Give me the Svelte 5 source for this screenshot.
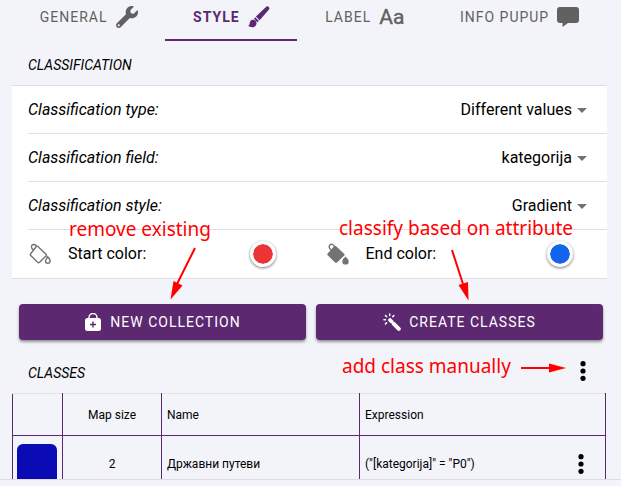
<script>
  const fields = [
    { id: 'type', label: 'Classification type:', value: 'Different values' },
    { id: 'field', label: 'Classification field:', value: 'kategorija' },
    { id: 'style', label: 'Classification style:', value: 'Gradient' }
  ];
  const classes = [
    { color: '#0b0bb5', size: 2, name: 'Државни путеви', expression: '("[kategorija]" = "P0")' }
  ];
  let start = $state('#ec3535');
  let end = $state('#1263ee');
</script>

{#snippet dots()}
  <svg width="6" height="20" viewBox="0 0 6 20" aria-hidden="true">
    <circle cx="3" cy="2.7" r="2.6" /><circle cx="3" cy="10" r="2.6" /><circle cx="3" cy="17.3" r="2.6" />
  </svg>
{/snippet}

<div class="page">
  <main>
    <nav>
      <button class="tab">
        GENERAL
        <svg width="22" height="22" viewBox="0 0 512 512"><path d="M507.73 109.1c-2.24-9.03-13.54-12.09-20.12-5.51l-74.36 74.36-67.88-11.31-11.31-67.88 74.36-74.36c6.62-6.62 3.43-17.9-5.66-20.16-47.38-11.74-99.55.91-136.58 37.93-39.64 39.64-50.55 97.1-34.05 147.2L18.74 402.76c-24.99 24.99-24.99 65.51 0 90.5 24.99 24.99 65.51 24.99 90.5 0l213.21-213.21c50.12 16.71 107.47 5.68 147.37-34.22 37.07-37.07 49.7-89.32 37.91-136.73zM64 472c-13.25 0-24-10.75-24-24 0-13.26 10.75-24 24-24s24 10.75 24 24c0 13.25-10.75 24-24 24z" /></svg>
      </button>
      <button class="tab active">
        STYLE
        <svg width="22" height="22" viewBox="0 0 22 22">
          <path d="M18 .9c1-.8 2-.8 2.800 0 .8.800.8 1.800 0 2.800L11.600 14.200 7.900 10.500Z" />
          <path d="M7.200 11.200l3.700 3.700-1.500 1.300-3.500-3.500Z" />
          <path d="M4.700 13.700c2.200-.1 3.900 1.500 3.800 3.600-.1 2.500-1.800 4-4.200 4-1.900 0-3.300-.6-4.100-1.700 1.300-.3 1.300-1.300 1.500-2.500.3-2 1.300-3.300 3-3.400Z" />
        </svg>
      </button>
      <button class="tab">LABEL <span class="aa" aria-hidden="true">Aa</span></button>
      <button class="tab">
        INFO PUPUP
        <svg width="22" height="22" viewBox="0 0 22 22"><path d="M3 1h16a3 3 0 0 1 3 3v10a3 3 0 0 1-3 3h-8l-5.500 4V17H3a3 3 0 0 1-3-3V4a3 3 0 0 1 3-3Z" /></svg>
      </button>
    </nav>

    <h2>CLASSIFICATION</h2>
    <section class="card">
      {#each fields as f}
        <div class="row">
          <label for={f.id}>{f.label}</label>
          <select id={f.id}><option>{f.value}</option></select>
          <svg width="10" height="7" viewBox="0 0 10 7" fill="#737373"><path d="M0 2h10L5 7Z" /></svg>
        </div>
      {/each}
      <div class="colors">
        <div class="color">
          <svg width="22" height="22" viewBox="0 0 22 22" fill="none" stroke="#737373" stroke-width="1.400" stroke-linejoin="round" stroke-linecap="round">
            <path d="M4.300 6.500C2.300 5.600 2 3.500 3 2.300c1.200-1.400 3.600-1 4.400 1" />
            <path d="M8.700 3.300 17.200 11.400q.7.700 0 1.400L10.500 19.300q-.9.800-1.800 0L1.700 12.500q-.8-.8 0-1.700L7.300 3.500q.7-.7 1.400-.2Z" />
            <path d="M18.200 13.600c1.800 1 2.900 2.700 2.900 4.400a2.300 2.300 0 0 1-4.600 0c0-1.400 1.900-2.300 1.700-4.400Z" />
          </svg>
          <label for="start">Start color:</label>
          <input id="start" type="color" bind:value={start} />
        </div>
        <div class="color">
          <svg width="22" height="22" viewBox="0 0 22 22" fill="#737373">
            <path d="M3.800 7C2 5 1.900 3.100 2.900 2c1.300-1.300 3.500-.8 4.300 1.200" fill="none" stroke="#737373" stroke-width="1.400" />
            <path d="M8.900 2.900 17.300 11q.8.900 0 1.600L10 19.400q-1 .8-1.900 0L.7 12.300q-.9-.9 0-1.800L7.200 3.100q.8-.8 1.700-.2Z" />
            <path d="M18.500 13.500c1.500 1.600 3.200 3 3.200 4.900a3.200 3.200 0 0 1-6.400 0c0-1.900 1.700-3.300 3.200-4.900Z" />
          </svg>
          <label for="end">End color:</label>
          <input id="end" type="color" bind:value={end} />
        </div>
      </div>
    </section>

    <div class="actions">
      <button>
        <svg width="18" height="18" viewBox="0 0 18 18">
          <path d="M5 6V4.500a4 4 0 0 1 8 0V6" fill="none" stroke="#fff" stroke-width="1.500" />
          <rect x="1" y="5" width="16" height="13" rx="2.500" fill="#fff" />
          <path d="M9 8.500v6M6 11.500h6" stroke="#5c2870" stroke-width="1.400" />
        </svg>
        NEW COLLECTION
      </button>
      <button>
        <svg width="18" height="18" viewBox="0 0 18 18" stroke="#fff" stroke-linecap="round">
          <path d="M7 7l1.500 1.500" stroke-width="3.800" />
          <path d="M10.800 10.800l5 5" stroke-width="4" />
          <path d="M6.700.9v1.600M2.500 2.500l1.100 1.100M.9 6.700h1.600M2.500 10.900l1.100-1.100M9.800 3.600l1.100-1.100" stroke-width="1.500" />
        </svg>
        CREATE CLASSES
      </button>
    </div>

    <div class="heading">
      <h2>CLASSES</h2>
      <button class="more" aria-label="Add class">{@render dots()}</button>
    </div>
    <table>
      <colgroup><col class="c1" /><col class="c2" /><col class="c3" /><col /></colgroup>
      <thead>
        <tr><th></th><th class="mid">Map size</th><th>Name</th><th>Expression</th></tr>
      </thead>
      <tbody>
        {#each classes as c}
          <tr>
            <td class="pick"><button class="swatch" style:background={c.color} aria-label="Class color"></button></td>
            <td class="mid">{c.size}</td>
            <td>{c.name}</td>
            <td><div class="expr">{c.expression}<button class="more" aria-label="Class menu">{@render dots()}</button></div></td>
          </tr>
        {/each}
      </tbody>
    </table>
  </main>
  <footer></footer>

  <span class="note remove">remove existing</span>
  <span class="note classify">classify based on attribute</span>
  <span class="note add">add class manually</span>
  <svg class="arrows" width="621" height="486" viewBox="0 0 621 486" fill="#f00" stroke="#f00" aria-hidden="true">
    <path d="M195 248 177 284M452 250 463 284M521 368h30" stroke-width="2" fill="none" />
    <path d="M170.500 299.500 173.500 281l9 4.500ZM468.500 300.500 458.500 285l9.500-3ZM566 368l-17 4.500v-9Z" stroke="none" />
  </svg>
</div>

<style>
  :global(body) { background: #f3f4f9; }
  .page {
    position: relative;
    height: 100vh;
    display: flex;
    flex-direction: column;
    overflow: hidden;
    font: 16px/20px Roboto, sans-serif;
    color: #000;
  }
  main { flex: 1; min-height: 0; overflow: hidden; padding: 0 14px 0 12px; }
  footer { height: 6px; border-top: 1px solid #dedee3; }
  button { font: inherit; border: 0; padding: 0; background: none; cursor: pointer; }
  svg { flex: none; }
  nav { display: flex; }
  .tab {
    flex: 1 1 auto;
    display: flex;
    justify-content: center;
    align-items: center;
    gap: 8px;
    height: 41px;
    padding-bottom: 5px;
    box-sizing: border-box;
    border-bottom: 2px solid transparent;
    font-size: 14px;
    letter-spacing: 1px;
    white-space: nowrap;
    color: #616161;
    fill: #616161;
  }
  .active { font-weight: 700; color: #5c2870; fill: #5c2870; border-color: #5c2870; }
  .aa { font-size: 21px; letter-spacing: 0; -webkit-text-stroke: 0.400px #616161; }
  h2 { margin: 0; padding: 14px 16px 10px; font-size: 14px; line-height: 20px; font-weight: 400; font-style: italic; }
  .card { background: #fff; border-top: 1px solid #dedee8; }
  .row {
    display: flex;
    align-items: center;
    gap: 5px;
    height: 47px;
    margin-left: 16px;
    padding-right: 20px;
    border-bottom: 1px solid #dedee8;
  }
  .row label { flex: 1; font-style: italic; }
  select {
    appearance: none;
    border: 0;
    padding: 0;
    background: none;
    font: inherit;
    color: inherit;
    width: 160px;
    text-align-last: right;
  }
  .colors { display: grid; grid-template-columns: 1fr 1fr; height: 48px; border-bottom: 1px solid #e4dcea; }
  .color { display: flex; align-items: center; gap: 17px; padding: 0 34px 0 17px; }
  .color label { flex: 1; }
  input[type='color'] {
    appearance: none;
    width: 26px;
    height: 26px;
    padding: 0;
    border: 3px solid #fff;
    border-radius: 50%;
    box-sizing: border-box;
    background: #fff;
    box-shadow: 0 1px 3px #0008;
  }
  input::-webkit-color-swatch-wrapper { padding: 0; }
  input::-webkit-color-swatch { border: 0; border-radius: 50%; }
  .actions { display: grid; grid-template-columns: 1fr 1fr; gap: 10px; padding: 25px 4px 0 7px; }
  .actions button {
    display: flex;
    align-items: center;
    justify-content: center;
    gap: 8px;
    height: 36px;
    border-radius: 4px;
    background: #5c2870;
    color: #fff;
    font-size: 14px;
    letter-spacing: 1px;
    box-shadow: 0 2px 3px #0006;
  }
  .heading { display: flex; align-items: center; justify-content: space-between; padding: 9px 21px 0 0; }
  .more { display: flex; }
  table { width: calc(100% - 1px); table-layout: fixed; border-collapse: collapse; font-size: 12px; border-top: 1px solid #e4dfe8; }
  .c1 { width: 50px; }
  .c2 { width: 99px; }
  .c3 { width: 198px; }
  th, td { border: 1px solid #5c2870; padding: 0 5px; text-align: left; font-weight: 400; }
  thead th { border-top-color: #e4dfe8; height: 41px; }
  tbody td { height: 56px; }
  .mid { text-align: center; }
  td.pick { padding: 0 4px; }
  .swatch { display: block; width: 40px; height: 40px; border-radius: 6px; }
  .expr { display: flex; justify-content: space-between; align-items: center; padding-right: 16px; }
  .note { position: absolute; font: 19px/24px 'Noto Sans', sans-serif; color: #f00; white-space: nowrap; }
  .remove { left: 69px; top: 217px; }
  .classify { left: 339px; top: 216px; }
  .add { left: 342px; top: 354px; }
  .arrows { position: absolute; left: 0; top: 0; pointer-events: none; }
</style>
